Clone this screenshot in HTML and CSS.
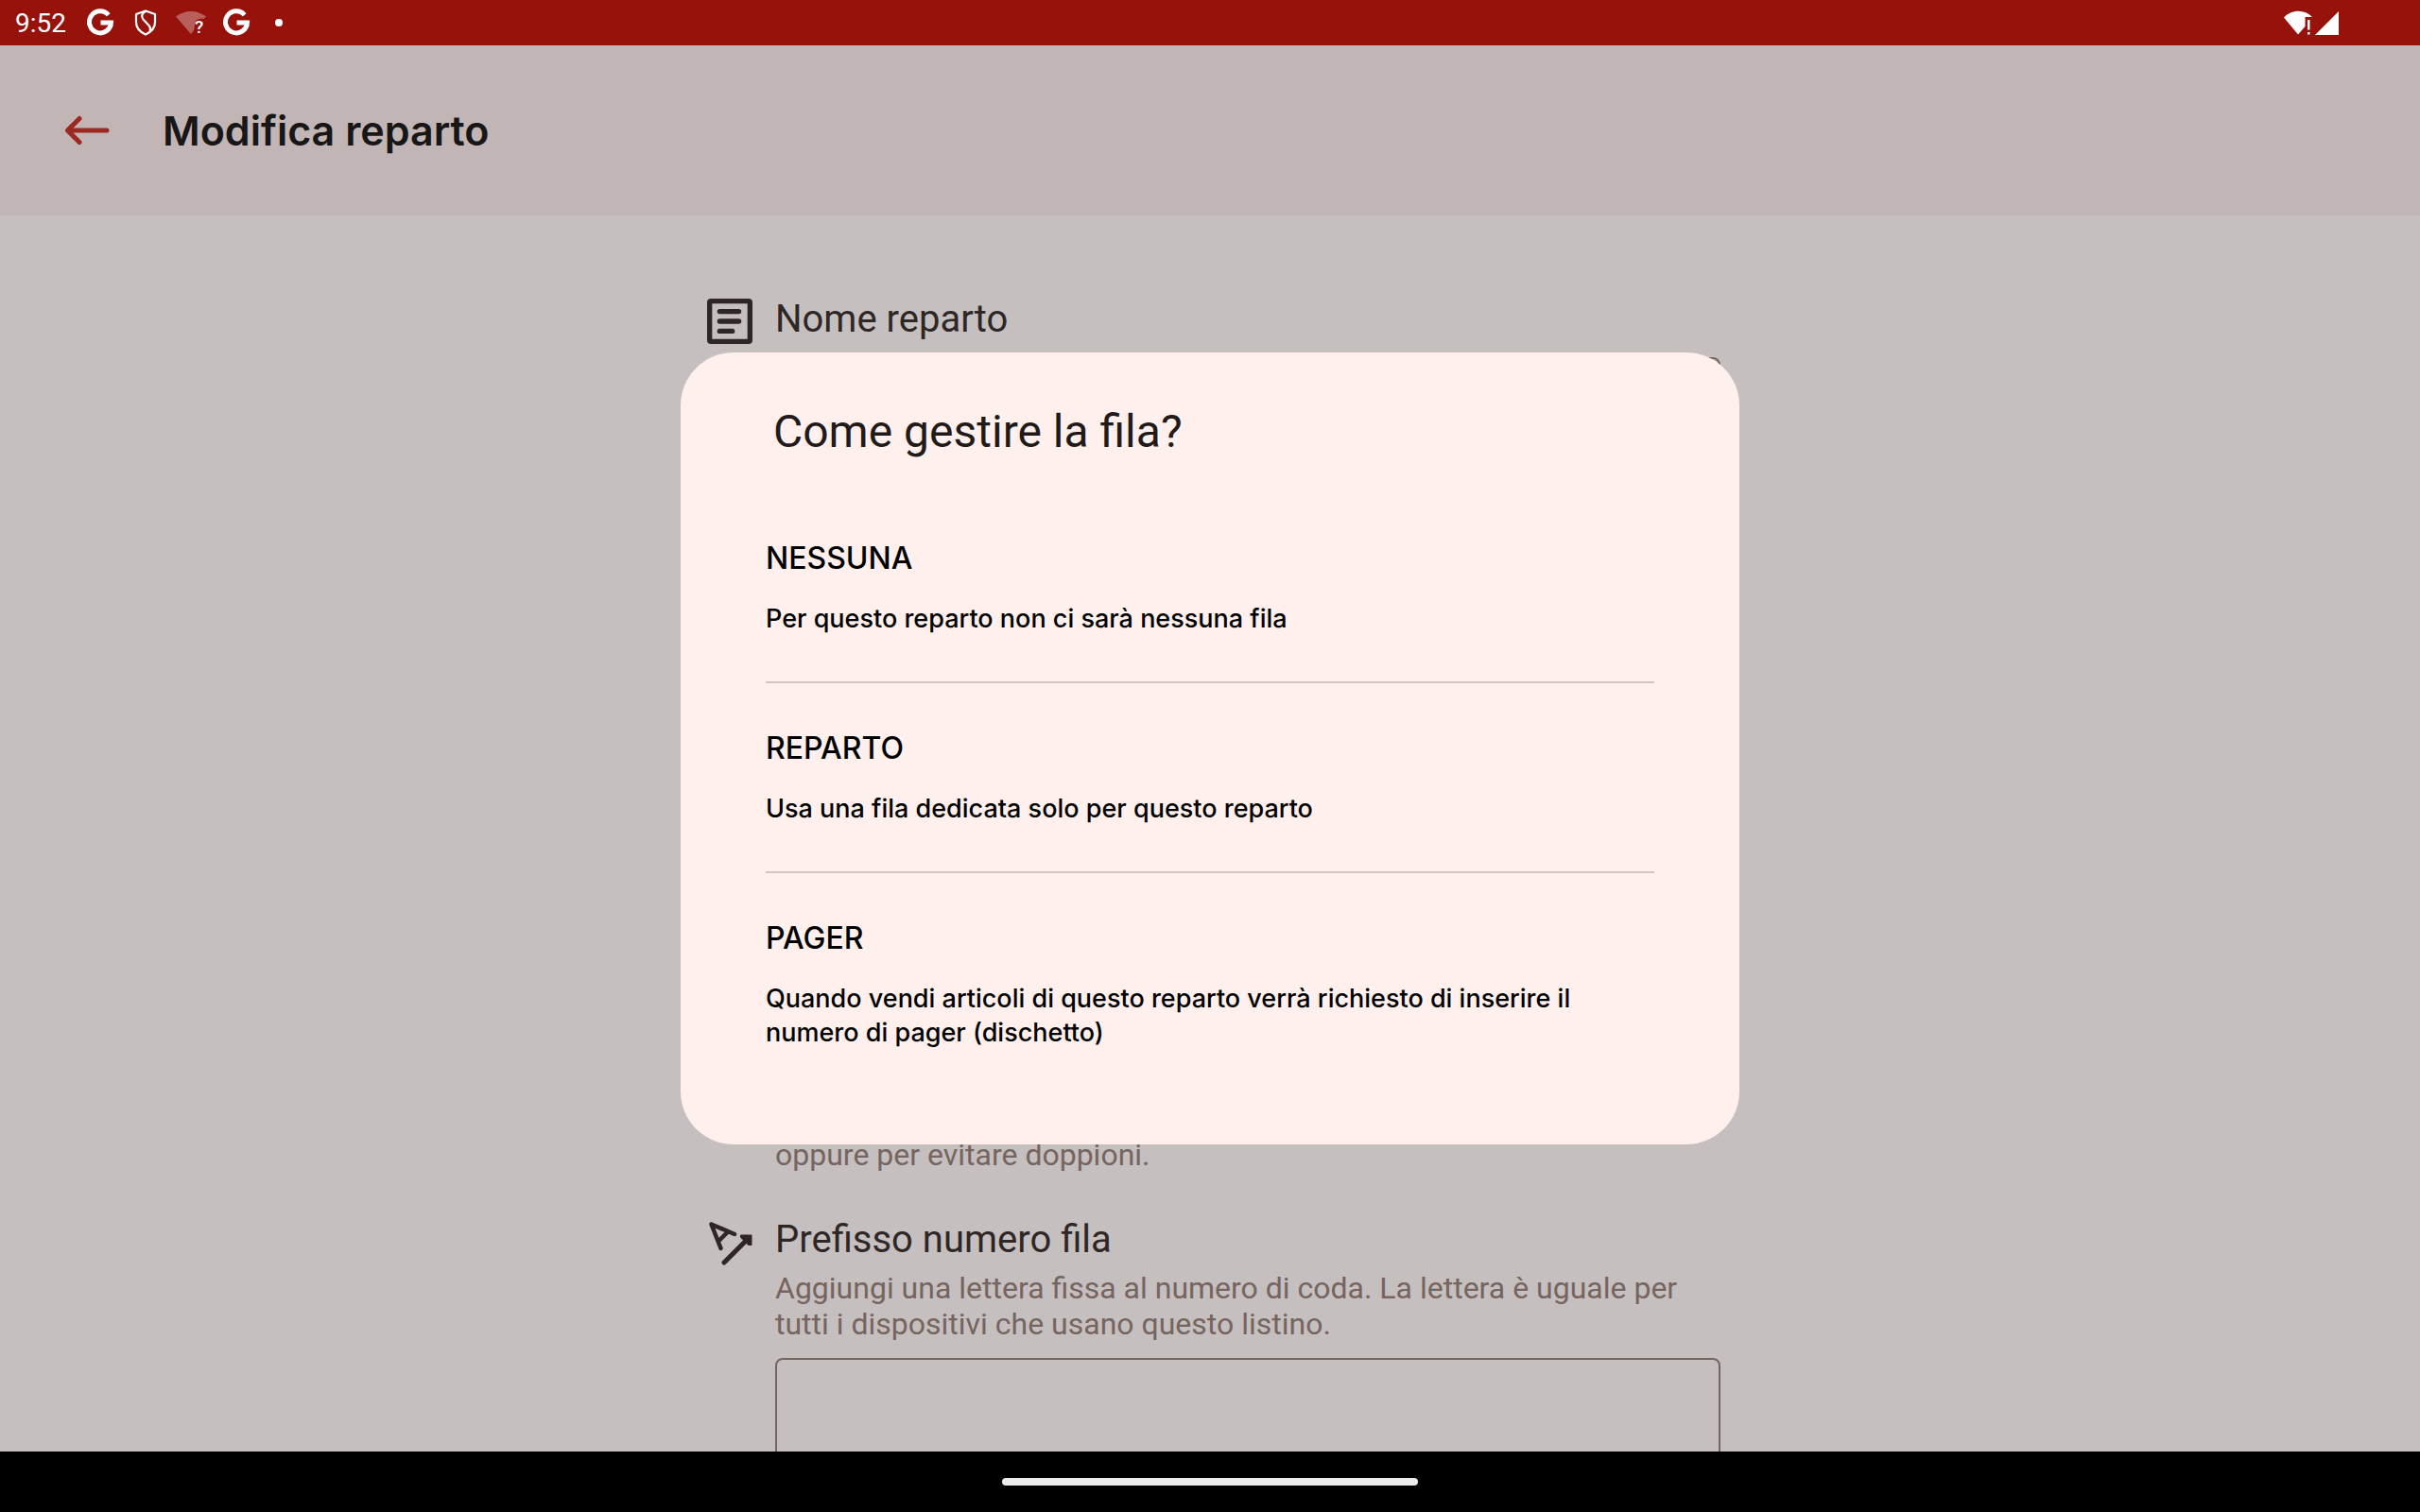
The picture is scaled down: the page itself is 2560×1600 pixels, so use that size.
FILE: index.html
```html
<!DOCTYPE html>
<html lang="it">
<head>
  <meta charset="UTF-8">
  <meta name="viewport" content="width=device-width, initial-scale=1">
  <title>Modifica reparto</title>
  <link rel="stylesheet" href="styles.css">
</head>
<body>
  <!-- status bar -->
  <div class="status-bar">
    <span class="clock">9:52</span>
    <svg class="status-icon" viewBox="0 0 32 32"><path d="M24.700 7.800A11.500 11.500 0 1 0 27.500 16H16.500" fill="none" stroke="#fff" stroke-width="5"/></svg>
    <svg class="status-icon" viewBox="0 0 32 32"><path d="M16 3.500L26 7v8.500c0 6-4.500 10.500-10 13C10.500 26 6 21.500 6 15.500V7z" fill="none" stroke="#fff" stroke-width="2.200" stroke-linejoin="round"/><path d="M16 4c-4 2-5 5.500-2.500 8.500l6 6.500c1.800 2 2 4 1 6" fill="none" stroke="#fff" stroke-width="2.200"/></svg>
    <svg class="status-icon" viewBox="0 0 32 32"><path d="M0 9.500C9 2 23 2 32 9.500L29.500 12c-6-1.500-10 2-9.500 7l-1 5-3 4z" fill="#fff" fill-opacity=".32"/><text x="20" y="27" class="status-mark">?</text></svg>
    <svg class="status-icon" viewBox="0 0 32 32"><path d="M24.700 7.800A11.500 11.500 0 1 0 27.500 16H16.500" fill="none" stroke="#fff" stroke-width="5"/></svg>
    <svg class="status-icon" viewBox="0 0 32 32"><circle cx="13" cy="16" r="4" fill="#fff"/></svg>
    <div class="network">
      <svg class="status-icon" viewBox="0 0 32 32"><path d="M0 10.500C8 1.500 22 1.500 30 10H22.500v10L15 28.500z" fill="#fff"/><path d="M25 13h2.500v10.500H25zM25 26h2.500v2.500H25z" fill="#fff"/></svg>
      <svg class="status-icon" viewBox="0 0 32 32"><path d="M26 4v25H1z" fill="#fff"/></svg>
    </div>
  </div>

  <div class="screen">
    <header class="app-bar">
      <button type="button" class="back" aria-label="Indietro">
        <svg viewBox="0 0 48 32"><path d="M45 16H4M16 3.500L3.500 16 16 28.500" fill="none" stroke="#9c2822" stroke-width="5" stroke-linecap="round" stroke-linejoin="round"/></svg>
      </button>
      <h1>Modifica reparto</h1>
    </header>

    <main class="form">
      <section class="field">
        <svg class="field-icon" viewBox="0 0 24 24"><rect x="4" y="4" width="16" height="16" rx=".5" fill="none" stroke="#2e2726" stroke-width="2"/><path d="M8 8.100h7.600M8 12h7.600M8 15.900h5" stroke="#2e2726" stroke-width="2" stroke-linecap="round"/></svg>
        <div class="field-body">
          <label for="nome">Nome reparto</label>
          <input type="text" id="nome">
        </div>
      </section>

      <section class="field field-queue">
        <div class="field-body">
          <p class="hint">oppure per evitare doppioni.</p>
        </div>
      </section>

      <section class="field">
        <svg class="field-icon" viewBox="0 0 64 64"><path d="M12.500 13.500L37 24M12.500 13.500L22.500 39M29.500 22L20.500 31" fill="none" stroke="#2e2726" stroke-width="4.500" stroke-linecap="round" stroke-linejoin="round"/><path d="M26 54L49 31" stroke="#2e2726" stroke-width="5.200" stroke-linecap="round"/><path d="M44 25.500h10.500V35H52L44 27z" fill="#2e2726" stroke="#2e2726" stroke-width="2" stroke-linejoin="round"/></svg>
        <div class="field-body">
          <label for="prefisso">Prefisso numero fila</label>
          <p class="hint">Aggiungi una lettera fissa al numero di coda. La lettera è uguale per tutti i dispositivi che usano questo listino.</p>
          <input type="text" id="prefisso">
        </div>
      </section>
    </main>

    <!-- queue mode dialog -->
    <div class="overlay">
      <div class="dialog" role="dialog" aria-labelledby="dialogTitle">
        <h2 id="dialogTitle">Come gestire la fila?</h2>
        <div class="options">
          <button type="button" class="option">
            <span class="option-name">NESSUNA</span>
            <span class="option-text">Per questo reparto non ci sarà nessuna fila</span>
          </button>
          <button type="button" class="option">
            <span class="option-name">REPARTO</span>
            <span class="option-text">Usa una fila dedicata solo per questo reparto</span>
          </button>
          <button type="button" class="option">
            <span class="option-name">PAGER</span>
            <span class="option-text">Quando vendi articoli di questo reparto verrà richiesto di inserire il numero di pager (dischetto)</span>
          </button>
        </div>
      </div>
    </div>
  </div>

  <div class="nav-bar"><span class="handle"></span></div>
</body>
</html>
```
FILE: styles.css
```css
* {
  box-sizing: border-box;
}
body {
  margin: 0;
  height: 100vh;
  display: flex;
  flex-direction: column;
  overflow: hidden;
  font-family: Roboto, sans-serif;
  background: #c5bfbf;
}
h1, h2, p {
  margin: 0;
}
button {
  padding: 0;
  border: none;
  background: none;
  cursor: pointer;
}

/* system bars */
.status-bar {
  flex: none;
  height: 48px;
  padding: 0 80px 0 16px;
  display: flex;
  align-items: center;
  gap: 16px;
  background: #98120c;
  color: #fff;
}
.clock {
  font-size: 28px;
  line-height: 32px;
  padding-top: 2px;
  margin-right: 4px;
}
.status-icon {
  width: 32px;
  height: 32px;
  flex: none;
}
.status-mark {
  font-size: 19px;
  font-weight: 500;
  fill: #fff;
}
.network {
  display: flex;
  margin-left: auto;
}
.nav-bar {
  flex: none;
  height: 64px;
  display: flex;
  align-items: center;
  justify-content: center;
  background: #000;
}
.handle {
  width: 440px;
  height: 8px;
  border-radius: 4px;
  background: #ececec;
}

/* page */
.screen {
  position: relative;
  flex: 1;
  min-height: 0;
  overflow: hidden;
}
.app-bar {
  height: 180px;
  padding: 0 68px;
  display: flex;
  align-items: center;
  gap: 56px;
  background: #c1b5b5;
}
.back svg {
  display: block;
  width: 48px;
  height: 32px;
}
.app-bar h1 {
  font-family: Inter, sans-serif;
  font-size: 43px;
  font-weight: 600;
  line-height: 56px;
  color: #181616;
}
.form {
  max-width: 1080px;
  margin: 0 auto;
  padding-top: 80px;
}
.field {
  display: flex;
  gap: 16px;
  margin-bottom: 34px;
}
.field-icon {
  flex: none;
  width: 64px;
  height: 64px;
}
.field-body {
  flex: 1;
}
.field-queue {
  padding: 661px 0 0 80px;
}
.field label {
  display: block;
  font-size: 40px;
  line-height: 60px;
  color: #2e2726;
}
.hint {
  padding: 2px 0 7px;
  font-size: 32px;
  line-height: 38px;
  color: #76645f;
}
.field input {
  display: block;
  width: 100%;
  height: 128px;
  margin-top: 10px;
  padding: 0 32px;
  border: 2px solid #76645f;
  border-radius: 8px;
  background: transparent;
  font: inherit;
  font-size: 32px;
}

/* dialog */
.overlay {
  position: absolute;
  inset: 0;
  display: flex;
  align-items: center;
  justify-content: center;
}
.dialog {
  width: 1120px;
  max-width: 90%;
  padding: 56px 90px 52px;
  border-radius: 56px;
  background: #fff0ed;
}
.dialog h2 {
  padding: 0 8px;
  font-size: 48px;
  font-weight: 400;
  line-height: 56px;
  color: #211a19;
}
.options {
  margin-top: 37px;
}
.option {
  display: flex;
  flex-direction: column;
  gap: 26px;
  width: 100%;
  padding: 49px 0 48px;
  border-bottom: 2px solid #d6c2bf;
  font-family: Inter, sans-serif;
  font-weight: 500;
  text-align: left;
  color: #000;
}
.option:last-child {
  border-bottom: none;
}
.option-name {
  font-size: 32px;
  line-height: 40px;
}
.option-text {
  font-size: 27px;
  line-height: 36px;
}
```
